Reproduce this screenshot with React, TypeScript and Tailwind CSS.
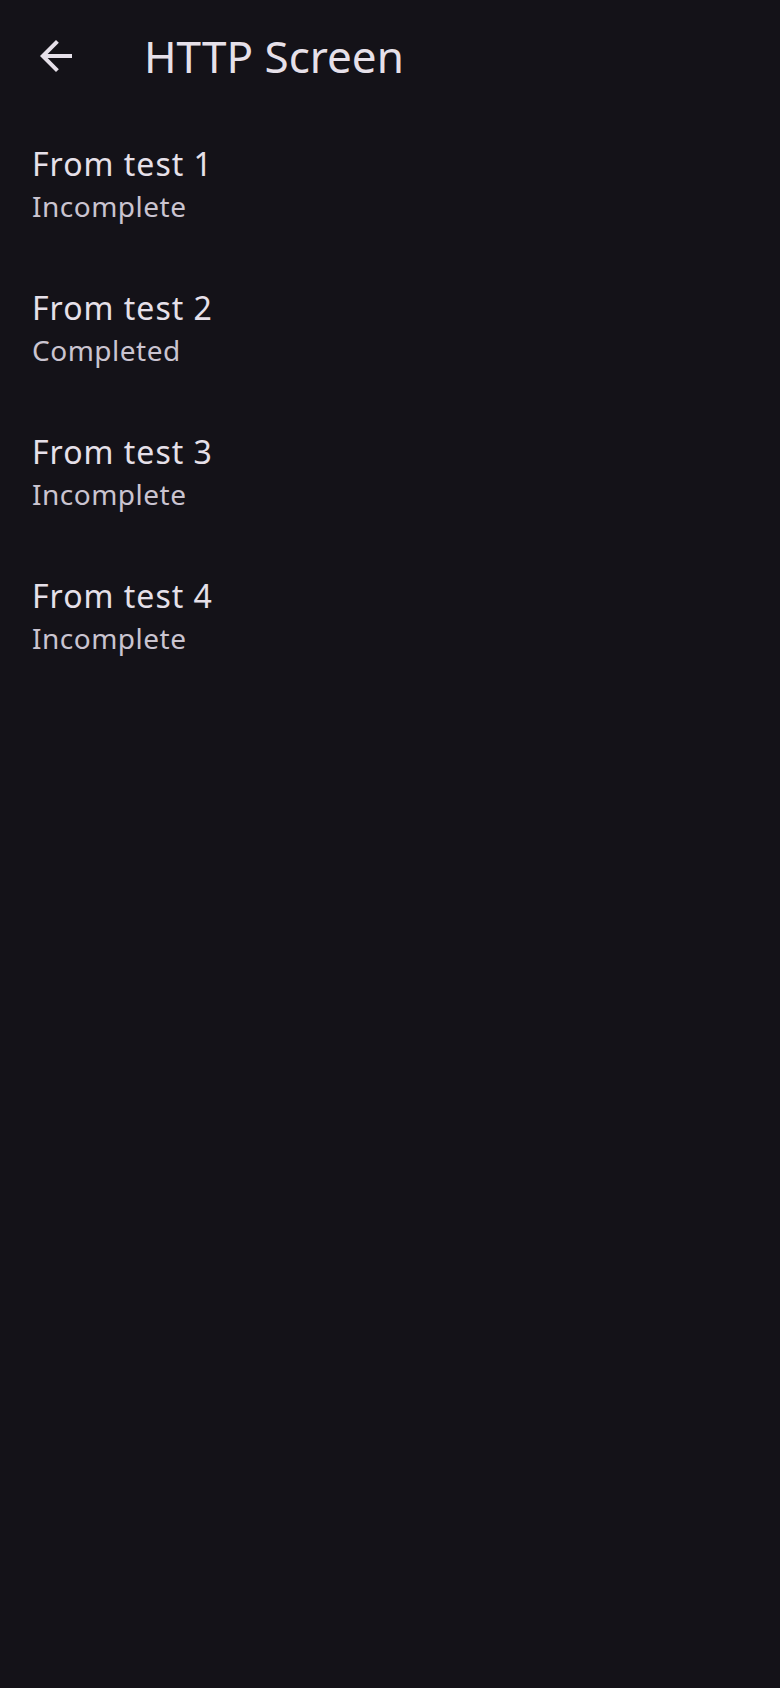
import React from "react";

const items = [
  { title: "From test 1", status: "Incomplete" },
  { title: "From test 2", status: "Completed" },
  { title: "From test 3", status: "Incomplete" },
  { title: "From test 4", status: "Incomplete" },
];

export default function App() {
  return (
    <div
      className="w-[780px] h-[1688px] bg-[#141218] flex flex-col"
      style={{ fontFamily: '"Noto Sans", "Open Sans", sans-serif' }}
    >
      <div className="h-[112px] flex items-center shrink-0">
        <div className="w-[48px] h-[48px] ml-[32px] flex items-center justify-center">
          <svg width="48" height="48" viewBox="0 0 24 24" fill="#E6E0E9">
            <path d="M20 11H7.83l5.59-5.59L12 4l-8 8 8 8 1.41-1.41L7.83 13H20v-2z" />
          </svg>
        </div>
        <div className="ml-[64px] text-[44px] leading-[56px] text-[#E6E0E9]">HTTP Screen</div>
      </div>
      <div className="flex flex-col">
        {items.map((it) => (
          <div key={it.title} className="h-[144px] flex flex-col justify-center px-[32px]">
            <div className="text-[32px] leading-[44px] tracking-[1px] text-[#E6E0E9]">{it.title}</div>
            <div className="text-[28px] leading-[40px] tracking-[0.5px] text-[#CAC4D0]">{it.status}</div>
          </div>
        ))}
      </div>
    </div>
  );
}
